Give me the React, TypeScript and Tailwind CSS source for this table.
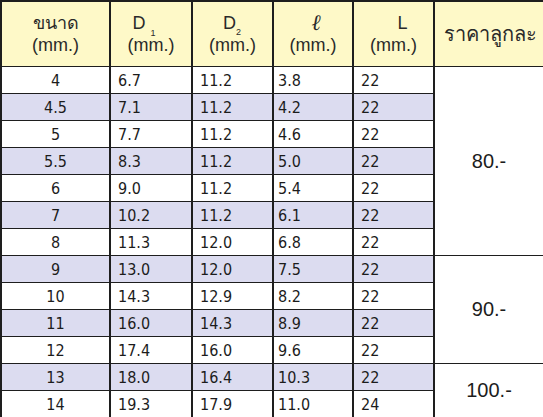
import React from "react";

const rows: [string, string, string, string, string][] = [
  ["4", "6.7", "11.2", "3.8", "22"],
  ["4.5", "7.1", "11.2", "4.2", "22"],
  ["5", "7.7", "11.2", "4.6", "22"],
  ["5.5", "8.3", "11.2", "5.0", "22"],
  ["6", "9.0", "11.2", "5.4", "22"],
  ["7", "10.2", "11.2", "6.1", "22"],
  ["8", "11.3", "12.0", "6.8", "22"],
  ["9", "13.0", "12.0", "7.5", "22"],
  ["10", "14.3", "12.9", "8.2", "22"],
  ["11", "16.0", "14.3", "8.9", "22"],
  ["12", "17.4", "16.0", "9.6", "22"],
  ["13", "18.0", "16.4", "10.3", "22"],
  ["14", "19.3", "17.9", "11.0", "24"],
];

const prices: Record<number, { text: string; span: number }> = {
  0: { text: "80.-", span: 7 },
  7: { text: "90.-", span: 4 },
  11: { text: "100.-", span: 2 },
};

const cell = "border-x-2 border-y-[1.5px] border-[#1e1e1e]";
const hdr = "font-['Liberation_Sans','Noto_Sans',sans-serif] text-[18px] leading-[22px] text-[#2a2a2a]";
const data = "font-['DejaVu_Sans_Condensed','DejaVu_Sans',sans-serif] text-[16px] text-[#1c1c1c] pt-[2px]";

export default function App() {
  return (
    <div className="w-[543px] h-[417px] bg-white">
      <table className="w-[543px] table-fixed border-collapse border-2 border-[#1e1e1e]">
        <colgroup>
          <col className="w-[109px]" />
          <col className="w-[82px]" />
          <col className="w-[81px]" />
          <col className="w-[80px]" />
          <col className="w-[81px]" />
          <col className="w-[110px]" />
        </colgroup>
        <thead>
          <tr className="h-[65px] bg-[#fef9c8]">
            <th className={`${cell} ${hdr} font-normal text-center`}>
              <div>ขนาด</div>
              <div>(mm.)</div>
            </th>
            <th className={`${cell} ${hdr} font-normal text-center`}>
              <div className="relative">
                <span className="relative left-[-12px]">
                  D
                  <span className="absolute left-[18px] top-[16px] text-[9px] leading-none">1</span>
                </span>
              </div>
              <div>(mm.)</div>
            </th>
            <th className={`${cell} ${hdr} font-normal text-center`}>
              <div className="relative">
                <span className="relative left-[-3px]">
                  D
                  <span className="absolute left-[13px] top-[15px] text-[9px] leading-none">2</span>
                </span>
              </div>
              <div>(mm.)</div>
            </th>
            <th className={`${cell} ${hdr} font-normal text-center`}>
              <div className="relative left-[3px] italic font-['DejaVu_Serif',serif] text-[22px] leading-[22px]">ℓ</div>
              <div>(mm.)</div>
            </th>
            <th className={`${cell} ${hdr} font-normal text-center`}>
              <div className="relative left-[9px]">L</div>
              <div>(mm.)</div>
            </th>
            <th className={`${cell} font-['Liberation_Sans','Noto_Sans',sans-serif] text-[20px] text-[#2a2a2a] font-normal text-center pl-[2px]`}>
              ราคาลูกละ
            </th>
          </tr>
        </thead>
        <tbody>
          {rows.map((r, i) => {
            const bg = i % 2 === 1 ? "bg-[#dcdcf0]" : "bg-white";
            const p = prices[i];
            return (
              <tr key={i} className="h-[27px]">
                <td className={`${cell} ${data} ${bg} text-center`}>{r[0]}</td>
                <td className={`${cell} ${data} ${bg} pl-[7px]`}>{r[1]}</td>
                <td className={`${cell} ${data} ${bg} pl-[7px]`}>{r[2]}</td>
                <td className={`${cell} ${data} ${bg} pl-[4px]`}>{r[3]}</td>
                <td className={`${cell} ${data} ${bg} pl-[7px]`}>{r[4]}</td>
                {p && (
                  <td
                    rowSpan={p.span}
                    className={`${cell} bg-white text-center font-['Liberation_Sans',sans-serif] text-[20px] text-[#1c1c1c]`}
                  >
                    {p.text}
                  </td>
                )}
              </tr>
            );
          })}
        </tbody>
      </table>
    </div>
  );
}
